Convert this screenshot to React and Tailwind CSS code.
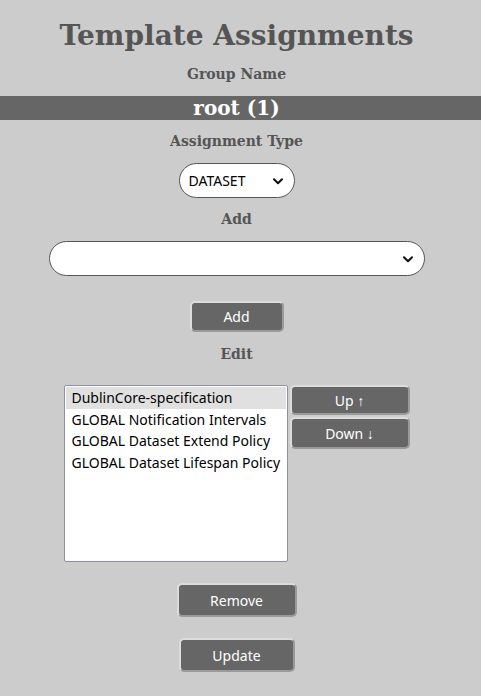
import React from "react";

const serif = { fontFamily: '"DejaVu Serif", serif' };

function Btn({ children, className = "" }) {
  return (
    <button
      className={`bg-[#666666] text-white text-[14px] rounded-[5px] border-2 border-t-[#dcdcdc] border-l-[#dcdcdc] border-b-[#9a9a9a] border-r-[#9a9a9a] ${className}`}
      style={{ fontFamily: '"Noto Sans", sans-serif' }}
    >
      {children}
    </button>
  );
}

function Chevron() {
  return (
    <svg width="12" height="12" viewBox="0 0 12 12" fill="none">
      <path d="M2 4.2 L6 8.2 L10 4.2" stroke="#111" strokeWidth="2" strokeLinecap="round" strokeLinejoin="round" />
    </svg>
  );
}

export default function App() {
  const items = [
    "DublinCore-specification",
    "GLOBAL Notification Intervals",
    "GLOBAL Dataset Extend Policy",
    "GLOBAL Dataset Lifespan Policy",
  ];
  return (
    <div className="w-[481px] min-h-[696px] bg-[#cccccc] overflow-hidden">
      <div className="flex flex-col items-center pr-2 pt-[17px] text-[#555555]" style={{ fontFamily: '"Noto Sans", sans-serif' }}>
        <h1 className="text-[28px] font-bold leading-[38px]" style={serif}>Template Assignments</h1>
        <div className="mt-[10px] text-[14px] font-bold leading-[18px]" style={serif}>Group Name</div>
        <div className="mt-[13px] w-[calc(100%+8px)] -mr-2 pr-2 bg-[#666666] h-[24px] flex items-center justify-center">
          <span className="text-white text-[20px] font-bold leading-[24px]" style={serif}>root (1)</span>
        </div>
        <div className="mt-[12px] text-[14px] font-bold leading-[18px]" style={serif}>Assignment Type</div>
        <div className="mt-[13px] w-[116px] h-[35px] bg-white border border-[#555] rounded-full flex items-center justify-between pl-[9px] pr-[10px] text-black text-[14px]">
          <span>DATASET</span>
          <Chevron />
        </div>
        <div className="mt-[12px] text-[14px] font-bold leading-[18px]" style={serif}>Add</div>
        <div className="mt-[13px] w-[376px] h-[35px] bg-white border border-[#555] rounded-full flex items-center justify-end pr-[10px]">
          <Chevron />
        </div>
        <Btn className="mt-[25px] w-[94px] h-[31px]">Add</Btn>
        <div className="mt-[13px] text-[14px] font-bold leading-[18px]" style={serif}>Edit</div>
        <div className="mt-[22px] flex items-start gap-[2px]">
          <div className="w-[224px] h-[177px] bg-white border border-[#8f8f9d] rounded-[2px] p-px text-black text-[14px]">
            {items.map((t, i) => (
              <div key={t} className={`h-[21.5px] leading-[21.5px] pl-[6px] whitespace-nowrap ${i === 0 ? "bg-[#e0e0e0]" : ""}`}>{t}</div>
            ))}
          </div>
          <div className="flex flex-col gap-[2px]">
            <Btn className="w-[120px] h-[30px]">Up ↑</Btn>
            <Btn className="w-[120px] h-[32px]">Down ↓</Btn>
          </div>
        </div>
        <Btn className="mt-[21px] w-[120px] h-[34px]">Remove</Btn>
        <Btn className="mt-[21px] w-[116px] h-[34px]">Update</Btn>
      </div>
    </div>
  );
}
